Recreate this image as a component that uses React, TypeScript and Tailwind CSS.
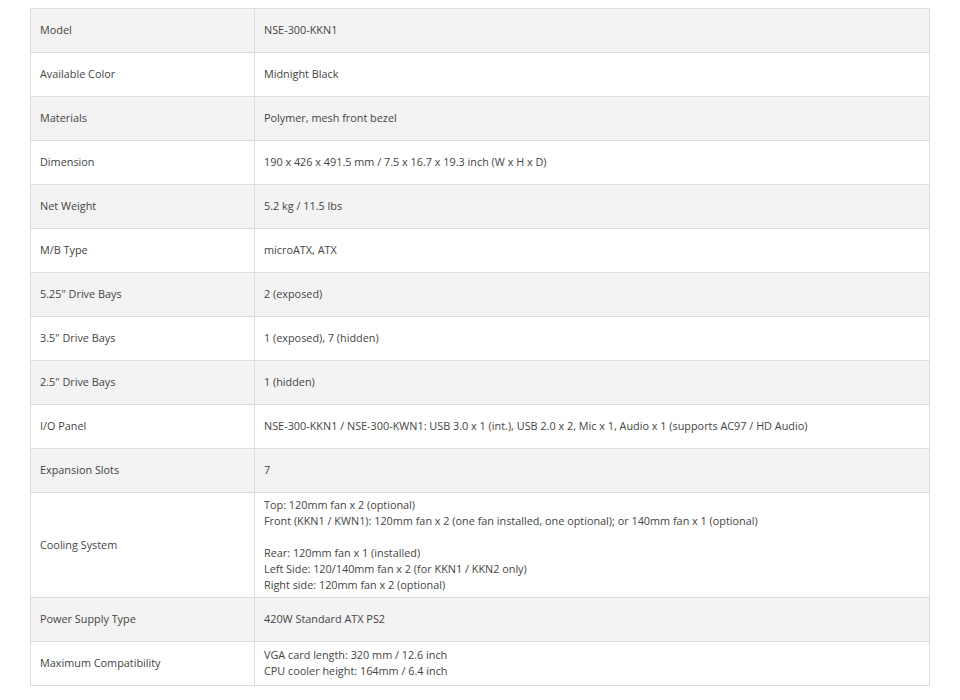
const rows: [string, string[]][] = [
  ["Model", ["NSE-300-KKN1"]],
  ["Available Color", ["Midnight Black"]],
  ["Materials", ["Polymer, mesh front bezel"]],
  ["Dimension", ["190 x 426 x 491.5 mm / 7.5 x 16.7 x 19.3 inch (W x H x D)"]],
  ["Net Weight", ["5.2 kg / 11.5 lbs"]],
  ["M/B Type", ["microATX, ATX"]],
  ["5.25\" Drive Bays", ["2 (exposed)"]],
  ["3.5\" Drive Bays", ["1 (exposed), 7 (hidden)"]],
  ["2.5\" Drive Bays", ["1 (hidden)"]],
  ["I/O Panel", ["NSE-300-KKN1 / NSE-300-KWN1: USB 3.0 x 1 (int.), USB 2.0 x 2, Mic x 1, Audio x 1 (supports AC97 / HD Audio)"]],
  ["Expansion Slots", ["7"]],
  ["Cooling System", [
    "Top: 120mm fan x 2 (optional)",
    "Front (KKN1 / KWN1): 120mm fan x 2 (one fan installed, one optional); or 140mm fan x 1 (optional)",
    "",
    "Rear: 120mm fan x 1 (installed)",
    "Left Side: 120/140mm fan x 2 (for KKN1 / KKN2 only)",
    "Right side: 120mm fan x 2 (optional)",
  ]],
  ["Power Supply Type", ["420W Standard ATX PS2"]],
  ["Maximum Compatibility", ["VGA card length: 320 mm / 12.6 inch", "CPU cooler height: 164mm / 6.4 inch"]],
];

export default function App() {
  return (
    <div className="w-[960px] h-[700px] bg-white pt-2 px-[30px]" style={{ fontFamily: '"Open Sans", sans-serif' }}>
      <table className="w-[900px] border-collapse text-[10.85px] leading-4 text-[#444]">
        <tbody>
          {rows.map(([k, v], i) => {
            const pad = v.length > 2 ? "pt-1 pb-1" : "pt-1 pb-[6px]";
            return (
              <tr key={k} className={i % 2 === 0 ? "bg-[#f3f3f3]" : "bg-white"}>
                <td className={`w-[224px] h-[44px] border border-[#dcdcdc] pl-[9px] pr-2 align-middle ${pad}`}>{k}</td>
                <td className={`h-[44px] border border-[#dcdcdc] pl-[9px] pr-2 align-middle ${pad}`}>
                  {v.map((line, j) => (
                    <div key={j} className="h-4">{line}</div>
                  ))}
                </td>
              </tr>
            );
          })}
        </tbody>
      </table>
    </div>
  );
}
